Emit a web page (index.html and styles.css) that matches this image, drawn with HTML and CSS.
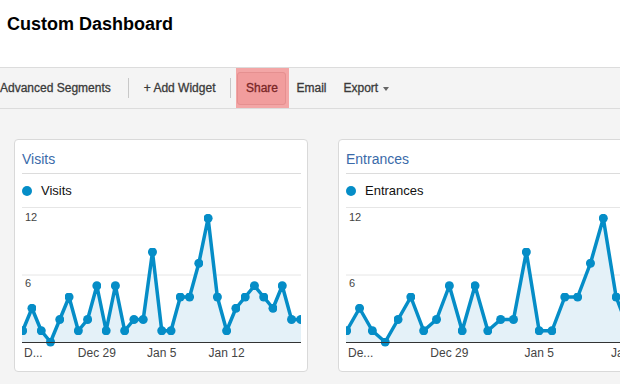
FILE: index.html
```html
<!DOCTYPE html>
<html>
<head>
<meta charset="utf-8">
<link rel="stylesheet" href="styles.css">
</head>
<body>
<header class="header">
  <h1 class="title">Custom Dashboard</h1>
</header>
<nav class="toolbar">
  <span class="tool tool-seg">Advanced Segments</span>
  <span class="sep sep-1"></span>
  <span class="tool tool-add">+ Add Widget</span>
  <span class="sep sep-2"></span>
  <span class="share-wrap"><span class="share-btn">Share</span></span>
  <span class="tool tool-email">Email</span>
  <span class="tool tool-export">Export</span>
  <span class="caret"></span>
</nav>
<main class="cards">
  <section class="card card-1">
    <h2 class="card-title">Visits</h2>
    <div class="legend"><span class="legend-dot"></span><span class="legend-text">Visits</span></div>
    <svg class="chart" width="279" height="155" viewBox="0 0 279 155">
      <defs>
        <marker id="dot1" viewBox="0 0 10 10" refX="5" refY="5" markerWidth="9" markerHeight="9" markerUnits="userSpaceOnUse">
          <circle cx="5" cy="5" r="5" fill="#058dc7"/>
        </marker>
      </defs>
      <line x1="0" y1="0.5" x2="279" y2="0.5" stroke="#e6e6e6"/>
      <line x1="0" y1="68" x2="279" y2="68" stroke="#e6e6e6"/>
      <polygon fill="#e4f1f8" points="0,123.75 0.7,123.75 9.97,101.25 19.24,123.75 28.51,135 37.78,112.5 47.05,90 56.32,123.75 65.59,112.5 74.86,78.75 84.13,123.75 93.4,78.75 102.67,123.75 111.94,112.5 121.21,112.5 130.48,45 139.75,123.75 149.02,123.75 158.29,90 167.56,90 176.83,56.25 186.1,11.25 195.37,90 204.64,123.75 213.91,101.25 223.18,90 232.45,78.75 241.72,90 250.99,101.25 260.26,78.75 269.53,112.5 278.8,112.5 279,112.5 279,135 0,135"/>
      <polyline fill="none" stroke="#058dc7" stroke-width="3.5" stroke-linejoin="round" marker-start="url(#dot1)" marker-mid="url(#dot1)" marker-end="url(#dot1)" points="0.7,123.75 9.97,101.25 19.24,123.75 28.51,135 37.78,112.5 47.05,90 56.32,123.75 65.59,112.5 74.86,78.75 84.13,123.75 93.4,78.75 102.67,123.75 111.94,112.5 121.21,112.5 130.48,45 139.75,123.75 149.02,123.75 158.29,90 167.56,90 176.83,56.25 186.1,11.25 195.37,90 204.64,123.75 213.91,101.25 223.18,90 232.45,78.75 241.72,90 250.99,101.25 260.26,78.75 269.53,112.5 278.8,112.5"/>
      <line x1="0" y1="135.5" x2="279" y2="135.5" stroke="#333"/>
      <text class="ylab" x="3" y="13.7">12</text>
      <text class="ylab" x="3" y="80.3">6</text>
      <text class="xlab" x="2" y="150.3">D...</text>
      <text class="xlab mid" x="74.86" y="150.3">Dec 29</text>
      <text class="xlab mid" x="139.75" y="150.3">Jan 5</text>
      <text class="xlab mid" x="204.64" y="150.3">Jan 12</text>
    </svg>
  </section>
  <section class="card card-2">
    <h2 class="card-title">Entrances</h2>
    <div class="legend"><span class="legend-dot"></span><span class="legend-text">Entrances</span></div>
    <svg class="chart" width="387" height="155" viewBox="0 0 387 155">
      <defs>
        <marker id="dot2" viewBox="0 0 10 10" refX="5" refY="5" markerWidth="9" markerHeight="9" markerUnits="userSpaceOnUse">
          <circle cx="5" cy="5" r="5" fill="#058dc7"/>
        </marker>
      </defs>
      <line x1="0" y1="0.5" x2="387" y2="0.5" stroke="#e6e6e6"/>
      <line x1="0" y1="68" x2="387" y2="68" stroke="#e6e6e6"/>
      <polygon fill="#e4f1f8" points="0,123.75 0.7,123.75 13.53,101.25 26.36,123.75 39.19,135 52.02,112.5 64.85,90 77.68,123.75 90.51,112.5 103.34,78.75 116.17,123.75 129,78.75 141.83,123.75 154.66,112.5 167.49,112.5 180.32,45 193.15,123.75 205.98,123.75 218.81,90 231.64,90 244.47,56.25 257.3,11.25 270.13,90 282.96,123.75 295.79,101.25 308.62,90 321.45,78.75 334.28,90 347.11,101.25 359.94,78.75 372.77,112.5 385.6,112.5 387,112.5 387,135 0,135"/>
      <polyline fill="none" stroke="#058dc7" stroke-width="3.5" stroke-linejoin="round" marker-start="url(#dot2)" marker-mid="url(#dot2)" marker-end="url(#dot2)" points="0.7,123.75 13.53,101.25 26.36,123.75 39.19,135 52.02,112.5 64.85,90 77.68,123.75 90.51,112.5 103.34,78.75 116.17,123.75 129,78.75 141.83,123.75 154.66,112.5 167.49,112.5 180.32,45 193.15,123.75 205.98,123.75 218.81,90 231.64,90 244.47,56.25 257.3,11.25 270.13,90 282.96,123.75 295.79,101.25 308.62,90 321.45,78.75 334.28,90 347.11,101.25 359.94,78.75 372.77,112.5 385.6,112.5"/>
      <line x1="0" y1="135.5" x2="387" y2="135.5" stroke="#333"/>
      <text class="ylab" x="3" y="13.7">12</text>
      <text class="ylab" x="3" y="80.3">6</text>
      <text class="xlab" x="2" y="150.3">De...</text>
      <text class="xlab mid" x="103.34" y="150.3">Dec 29</text>
      <text class="xlab mid" x="193.15" y="150.3">Jan 5</text>
      <text class="xlab mid" x="282.96" y="150.3">Jan 12</text>
    </svg>
  </section>
</main>
</body>
</html>
```
FILE: styles.css
```css
html, body {
  margin: 0;
  padding: 0;
  overflow: hidden;
}
body {
  background: #f4f4f4;
  font-family: "Liberation Sans", Arial, sans-serif;
  width: 620px;
  height: 384px;
}
.header {
  background: #fff;
  height: 67px;
  padding: 14px 0 0 7px;
  box-sizing: border-box;
}
.title {
  margin: 0;
  font-size: 18px;
  line-height: 20px;
  font-weight: bold;
  color: #000;
}
.toolbar {
  display: flex;
  align-items: center;
  height: 40px;
  border-top: 1px solid #dcdcdc;
  border-bottom: 1px solid #dcdcdc;
  background: #f4f4f4;
  font-size: 12px;
  color: #3a3a3a;
  -webkit-text-stroke: 0.3px #3a3a3a;
  white-space: nowrap;
}
.tool {
  line-height: 40px;
}
.sep {
  width: 1px;
  height: 20px;
  background: #c8c8c8;
}
.sep-1 { margin-left: 17px; }
.tool-add { margin-left: 15px; }
.sep-2 { margin-left: 15px; }
.share-wrap {
  margin-left: 5px;
  align-self: stretch;
  display: flex;
  align-items: center;
  padding: 0 3px 0 1px;
  background: #f3a6a6;
}
.share-btn {
  display: block;
  width: 47px;
  height: 31px;
  line-height: 31px;
  text-align: center;
  border: 1px solid #e59090;
  border-radius: 3px;
  background: #f19d9d;
  color: #7a2626;
  -webkit-text-stroke: 0.3px #7a2626;
}
.tool-email { margin-left: 7px; }
.tool-export { margin-left: 17px; }
.caret {
  margin-left: 5px;
  width: 0;
  height: 0;
  border-left: 3.5px solid transparent;
  border-right: 3.5px solid transparent;
  border-top: 4px solid #666;
  margin-top: 1px;
}
.cards {
  display: flex;
  gap: 30px;
  padding: 30px 0 0 14px;
}
.card {
  flex-shrink: 0;
  background: #fff;
  border: 1px solid #d9d9d9;
  border-radius: 4px;
  padding: 10px 6px 9px 7px;
}
.card-title {
  margin: 0;
  font-size: 14px;
  line-height: 18px;
  font-weight: normal;
  color: #3a6aa9;
  padding-bottom: 5px;
  border-bottom: 1px solid #dcdcdc;
}
.legend {
  display: flex;
  align-items: center;
  height: 33px;
  font-size: 13px;
  color: #111;
}
.legend-dot {
  width: 10px;
  height: 10px;
  border-radius: 50%;
  background: #058dc7;
  margin-right: 9px;
}
.chart {
  display: block;
  overflow: hidden;
}
.ylab {
  font-family: "Liberation Sans", Arial, sans-serif;
  font-size: 11px;
  fill: #444;
}
.xlab {
  font-family: "Liberation Sans", Arial, sans-serif;
  font-size: 12px;
  fill: #444;
}
.mid {
  text-anchor: middle;
}
```
